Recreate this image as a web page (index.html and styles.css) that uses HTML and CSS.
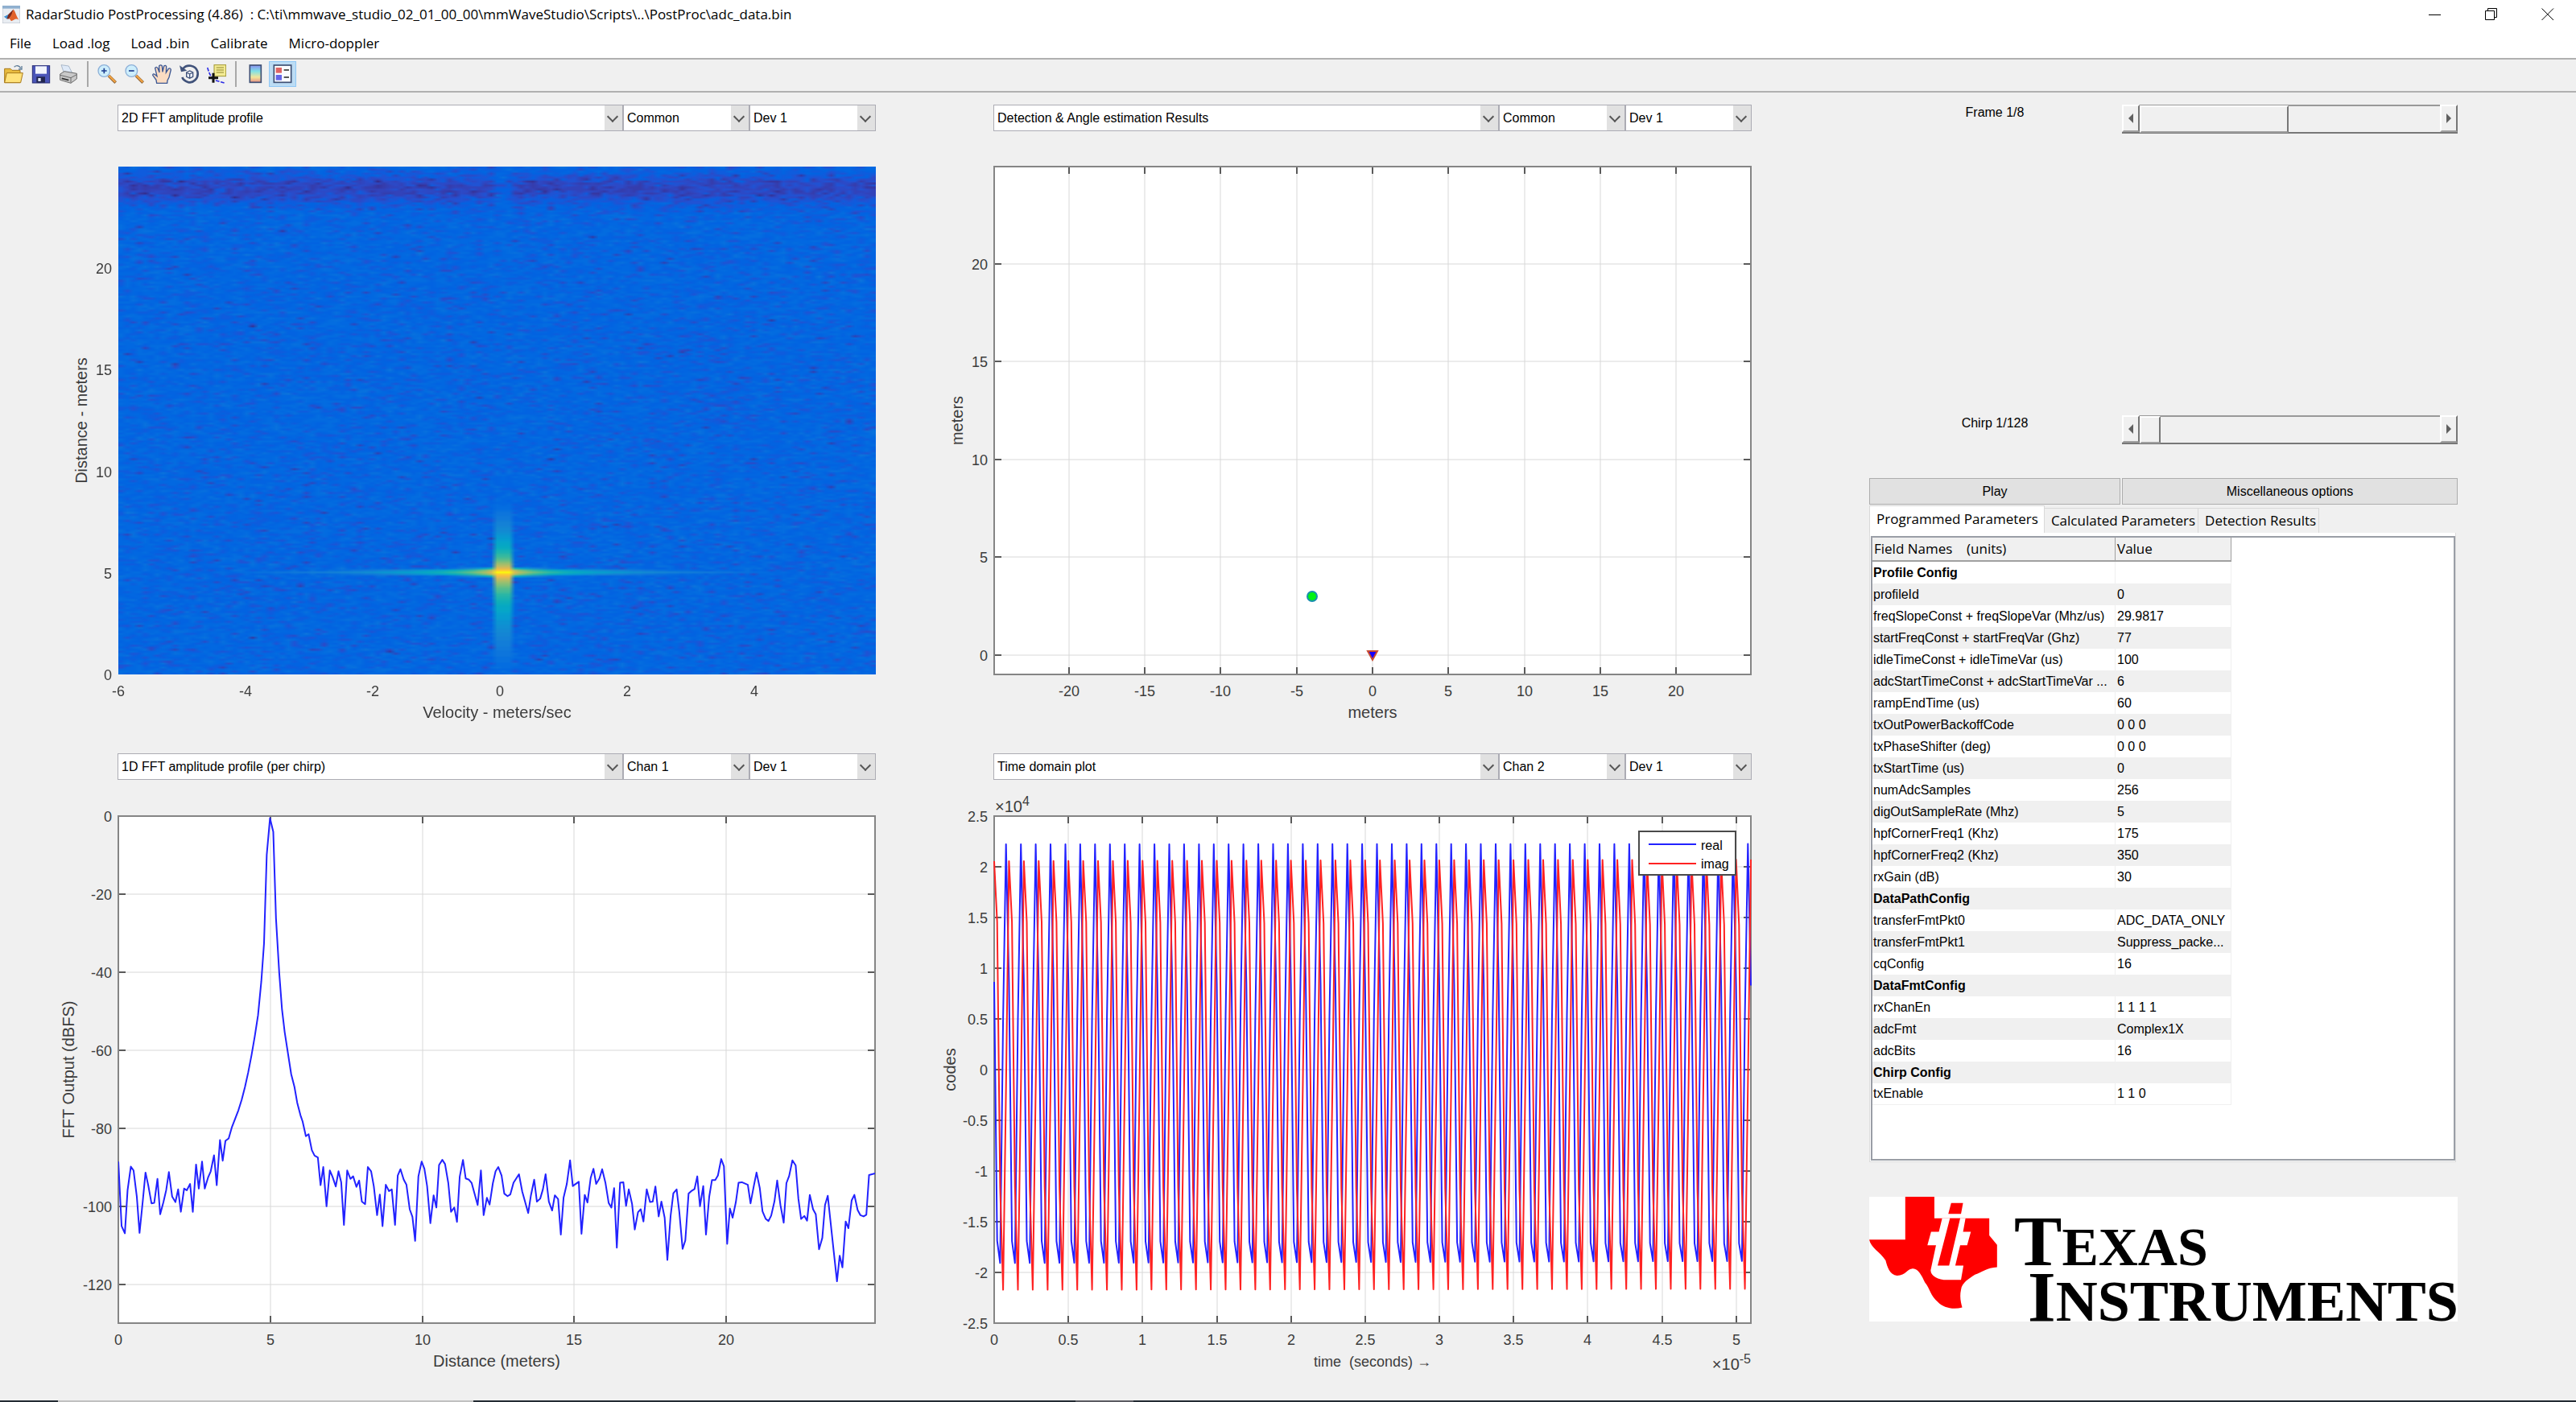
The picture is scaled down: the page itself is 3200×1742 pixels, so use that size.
FILE: index.html
```html
<!DOCTYPE html>
<html lang="en">
<head>
<meta charset="utf-8">
<title>RadarStudio PostProcessing (4.86)</title>
<link rel="stylesheet" href="styles.css">
</head>
<body>
<header class="titlebar">
  <svg class="app-icon" viewBox="0 0 24 24" aria-hidden="true"><rect x="0" y="0" width="24" height="24" fill="#e9edf2" stroke="#b4bcc6"/><rect x="0" y="0" width="24" height="4" fill="#8fb0cf"/><path d="M2 15 L8 12 L11 15 L6 18Z" fill="#3f8fd0"/><path d="M8 12 L15 5 L13 12 L9 18 L6 18Z" fill="#7d2a1c"/><path d="M15 5 C18 9 19 15 22 19 C18 16 15 20 12 21 L9 17 C12 15 13 10 15 5Z" fill="#e2622a"/></svg>
  <h1 class="window-title">RadarStudio PostProcessing (4.86) &nbsp;: C:\ti\mmwave_studio_02_01_00_00\mmWaveStudio\Scripts\..\PostProc\adc_data.bin</h1>
  <div class="window-buttons">
    <button type="button" aria-label="Minimize"><svg viewBox="0 0 16 16"><path d="M0 8.5H15"/></svg></button>
    <button type="button" aria-label="Restore"><svg viewBox="0 0 16 16"><path d="M3.5 3V.5H14.500V11.500H12M.5 3.500H11.500V14.500H.5Z"/></svg></button>
    <button type="button" aria-label="Close"><svg viewBox="0 0 16 16"><path d="M.5 .5L15 15M15 .5L.5 15"/></svg></button>
  </div>
</header>
<nav class="menubar" aria-label="Main menu">
  <button type="button">File</button>
  <button type="button">Load .log</button>
  <button type="button">Load .bin</button>
  <button type="button">Calibrate</button>
  <button type="button">Micro-doppler</button>
</nav>
<div class="toolbar" role="toolbar" aria-label="Figure tools">
  <button type="button" aria-label="Open"><svg viewBox="12 30 72 72"><path d="M14 46H36L42 52H72V98H14Z" fill="#e8bb3e" stroke="#a8791a" stroke-width="3"/><path d="M22 62H82L74 98H14Z" fill="#ffe27a" stroke="#a8791a" stroke-width="3"/><path d="M50 40C58 32 68 34 74 44M78 36V48H66" fill="none" stroke="#5f7d99" stroke-width="4"/></svg></button>
  <button type="button" aria-label="Save"><svg viewBox="119 30 72 72"><rect x="123" y="35" width="64" height="64" fill="#4a55b8" stroke="#262b75" stroke-width="3"/><rect x="134" y="37" width="42" height="28" fill="#f2f5fd"/><rect x="138" y="76" width="32" height="22" fill="#22264f"/><rect x="144" y="81" width="10" height="12" fill="#dfe4f6"/></svg></button>
  <button type="button" aria-label="Print"><svg viewBox="221 30 72 72"><path d="M230 32L258 36L270 60L242 66Z" fill="#dfeaf8" stroke="#8c9fb5" stroke-width="2"/><path d="M226 66L242 56L288 64V84L266 100L226 88Z" fill="#c9c9c9" stroke="#6b6b6b" stroke-width="3"/><path d="M226 70L266 80L288 68M266 80V98" stroke="#6b6b6b" stroke-width="3" fill="none"/><path d="M232 82L258 89" stroke="#333" stroke-width="5"/></svg></button>
  <span class="separator"></span>
  <button type="button" aria-label="Zoom in"><svg viewBox="360 30 72 72"><path d="M402 72L428 98" stroke="#8a6236" stroke-width="11"/><path d="M403 72L427 96" stroke="#f3a443" stroke-width="7"/><circle cx="385" cy="54" r="22" fill="#cdeefc" stroke="#8db0d8" stroke-width="4"/><path d="M375 54H395M385 44V64" stroke="#1d3d8f" stroke-width="5"/></svg></button>
  <button type="button" aria-label="Zoom out"><svg viewBox="463 30 72 72"><path d="M505 72L531 98" stroke="#8a6236" stroke-width="11"/><path d="M506 72L530 96" stroke="#f3a443" stroke-width="7"/><circle cx="488" cy="54" r="22" fill="#cdeefc" stroke="#8db0d8" stroke-width="4"/><path d="M478 54H498" stroke="#1d3d8f" stroke-width="5"/></svg></button>
  <button type="button" aria-label="Pan"><svg viewBox="567 30 72 72"><path d="M584 100L582 88L569 70Q570 62 578 68L585 74L578 44Q582 36 588 44L594 60L593 36Q599 29 604 36L606 58L611 36Q617 31 620 38L619 60L628 46Q635 42 637 50L630 78L624 90L623 100Z" fill="#fbdcc2" stroke="#3d5894" stroke-width="4"/></svg></button>
  <button type="button" aria-label="Rotate 3D"><svg viewBox="671 30 72 72"><path d="M684 46C698 28 730 32 738 56C744 84 720 102 702 96C690 92 684 86 681 78" fill="none" stroke="#40527a" stroke-width="8"/><path d="M671 34L677 58L699 53Z" fill="#40527a"/><path d="M697 60L709 54L721 60V76L709 82L697 76ZM697 60L709 66L721 60M709 66V82" fill="#eef3fb" stroke="#40527a" stroke-width="4"/></svg></button>
  <button type="button" aria-label="Data cursor"><svg viewBox="773 30 72 72"><path d="M775 42C780 56 782 66 792 80M806 90L842 100" stroke="#2a2ae6" stroke-width="5" stroke-dasharray="14 5" fill="none"/><rect x="800" y="32" width="44" height="42" fill="#f3eb94" stroke="#a09632" stroke-width="3"/><path d="M808 42H836M808 51H836M808 60H836" stroke="#b3a951" stroke-width="4"/><path d="M797 62V98M779 80H815" stroke="#111" stroke-width="9"/></svg></button>
  <span class="separator"></span>
  <button type="button" aria-label="Insert colorbar"><svg viewBox="914 30 72 72"><defs><linearGradient id="bar" x1="0" y1="0" x2="0" y2="1"><stop offset="0" stop-color="#8a8ff0"/><stop offset=".35" stop-color="#7fe0e6"/><stop offset=".7" stop-color="#f2e59a"/><stop offset="1" stop-color="#e88f86"/></linearGradient></defs><rect x="930" y="33" width="42" height="64" fill="url(#bar)" stroke="#3e4f73" stroke-width="5"/></svg></button>
  <button type="button" class="active" aria-label="Insert legend" aria-pressed="true"><svg viewBox="1016 30 72 72"><rect x="1020" y="33" width="64" height="64" fill="#fafcff" stroke="#3e4f73" stroke-width="5"/><rect x="1027" y="42" width="22" height="20" fill="#e06464"/><rect x="1027" y="69" width="22" height="20" fill="#6565e8"/><path d="M1057 51H1076M1057 78H1076" stroke="#222" stroke-width="5"/></svg></button>
</div>

<main class="workspace">
  <div class="plots">
    <section class="panel">
      <div class="pickers">
        <label class="combo wide"><select aria-label="Plot type"><option>2D FFT amplitude profile</option></select></label>
        <label class="combo"><select aria-label="Channel"><option>Common</option></select></label>
        <label class="combo"><select aria-label="Device"><option>Dev 1</option></select></label>
      </div>
      <svg class="chart" id="fft2d" viewBox="60 163 1028 757" role="img" aria-label="2D FFT amplitude profile">
        <foreignObject x="147" y="207" width="941" height="631"><canvas id="heatmap" class="heatmap" width="127" height="256"></canvas></foreignObject>
      </svg>
    </section>
    <section class="panel">
      <div class="pickers">
        <label class="combo wide"><select aria-label="Plot type"><option>Detection &amp; Angle estimation Results</option></select></label>
        <label class="combo"><select aria-label="Channel"><option>Common</option></select></label>
        <label class="combo"><select aria-label="Device"><option>Dev 1</option></select></label>
      </div>
      <svg class="chart" id="detection" viewBox="1148 163 1028 757" role="img" aria-label="Detection results"></svg>
    </section>
    <section class="panel">
      <div class="pickers">
        <label class="combo wide"><select aria-label="Plot type"><option>1D FFT amplitude profile (per chirp)</option></select></label>
        <label class="combo"><select aria-label="Channel"><option>Chan 1</option></select></label>
        <label class="combo"><select aria-label="Device"><option>Dev 1</option></select></label>
      </div>
      <svg class="chart" id="fft1d" viewBox="60 969 1028 757" role="img" aria-label="1D FFT amplitude profile"></svg>
    </section>
    <section class="panel">
      <div class="pickers">
        <label class="combo wide"><select aria-label="Plot type"><option>Time domain plot</option></select></label>
        <label class="combo"><select aria-label="Channel"><option>Chan 2</option></select></label>
        <label class="combo"><select aria-label="Device"><option>Dev 1</option></select></label>
      </div>
      <svg class="chart" id="time" viewBox="1148 969 1028 757" role="img" aria-label="Time domain plot"></svg>
    </section>
  </div>

  <aside class="side">
    <div class="stepper frame">
      <label for="frame">Frame 1/8</label>
      <div class="scroller">
        <button type="button" class="prev" aria-label="Previous frame"></button>
        <input id="frame" type="range" min="1" max="8" value="1">
        <button type="button" class="next" aria-label="Next frame"></button>
      </div>
    </div>
    <div class="stepper chirp">
      <label for="chirp">Chirp 1/128</label>
      <div class="scroller">
        <button type="button" class="prev" aria-label="Previous chirp"></button>
        <input id="chirp" type="range" min="1" max="128" value="1">
        <button type="button" class="next" aria-label="Next chirp"></button>
      </div>
    </div>
    <div class="actions">
      <button type="button">Play</button>
      <button type="button">Miscellaneous options</button>
    </div>
    <div class="tabs" role="tablist">
      <button type="button" role="tab" aria-selected="true">Programmed Parameters</button>
      <button type="button" role="tab" aria-selected="false">Calculated Parameters</button>
      <button type="button" role="tab" aria-selected="false">Detection Results</button>
    </div>
    <div class="tab-panel" role="tabpanel">
      <div class="table-box">
        <table>
          <thead><tr><th>Field Names &nbsp; &nbsp;(units)</th><th>Value</th></tr></thead>
          <tbody>
            <tr class="group"><td>Profile Config</td><td></td></tr>
            <tr><td>profileId</td><td>0</td></tr>
            <tr><td>freqSlopeConst + freqSlopeVar (Mhz/us)</td><td>29.9817</td></tr>
            <tr><td>startFreqConst + startFreqVar (Ghz)</td><td>77</td></tr>
            <tr><td>idleTimeConst + idleTimeVar (us)</td><td>100</td></tr>
            <tr><td>adcStartTimeConst + adcStartTimeVar ...</td><td>6</td></tr>
            <tr><td>rampEndTime (us)</td><td>60</td></tr>
            <tr><td>txOutPowerBackoffCode</td><td>0 0 0</td></tr>
            <tr><td>txPhaseShifter (deg)</td><td>0 0 0</td></tr>
            <tr><td>txStartTime (us)</td><td>0</td></tr>
            <tr><td>numAdcSamples</td><td>256</td></tr>
            <tr><td>digOutSampleRate (Mhz)</td><td>5</td></tr>
            <tr><td>hpfCornerFreq1 (Khz)</td><td>175</td></tr>
            <tr><td>hpfCornerFreq2 (Khz)</td><td>350</td></tr>
            <tr><td>rxGain (dB)</td><td>30</td></tr>
            <tr class="group"><td>DataPathConfig</td><td></td></tr>
            <tr><td>transferFmtPkt0</td><td>ADC_DATA_ONLY</td></tr>
            <tr><td>transferFmtPkt1</td><td>Suppress_packe...</td></tr>
            <tr><td>cqConfig</td><td>16</td></tr>
            <tr class="group"><td>DataFmtConfig</td><td></td></tr>
            <tr><td>rxChanEn</td><td>1 1 1 1</td></tr>
            <tr><td>adcFmt</td><td>Complex1X</td></tr>
            <tr><td>adcBits</td><td>16</td></tr>
            <tr class="group"><td>Chirp Config</td><td></td></tr>
            <tr><td>txEnable</td><td>1 1 0</td></tr>
          </tbody>
        </table>
      </div>
    </div>
    <svg class="logo" viewBox="2322 1488 731 155" role="img" aria-label="Texas Instruments">
      <rect x="2322" y="1488" width="731" height="155" fill="#fff"/>
      <svg x="2322" y="1488" width="731" height="155" viewBox="40 1096 1436 381" preserveAspectRatio="none">
        <path fill="#f00" d="M40 1227H128V1096H199V1162H333V1214L352 1243V1311C328 1312 312 1328 298 1334C284 1346 266 1358 264 1380C260 1402 264 1420 267 1434C244 1442 220 1434 208 1418C190 1400 188 1376 176 1358C168 1336 158 1312 144 1316C132 1318 130 1335 108 1337C90 1334 84 1310 80 1290C66 1264 44 1252 40 1227Z"/>
        <path fill="#fff" d="M218 1162L210 1203H191L182 1244H203L190 1320C190 1338 208 1350 230 1350H264L270 1306H250L262 1244H279L288 1203H269L275 1162Z"/>
        <path fill="#f00" d="M237 1162H262L235 1306H207ZM240 1115H269L264 1148H233Z"/>
      </svg>
      <text x="2502" y="1573" class="logo-text"><tspan class="cap">T</tspan>EXAS</text>
      <text x="2519" y="1642" class="logo-text second"><tspan class="cap">I</tspan>NSTRUMENTS</text>
    </svg>
  </aside>
</main>
<footer class="taskbar"><span class="gap-left"></span><span class="lit"></span><span class="gap-mid"></span><span class="dim"></span></footer>
<script src="charts.js"></script>
</body>
</html>
```
FILE: styles.css
```css
* { box-sizing: border-box; }
body {
  margin: 0;
  min-height: 100vh;
  display: flex;
  flex-direction: column;
  background: #f0f0f0;
  color: #000;
  font: 16px/20px "Liberation Sans", Arial, sans-serif;
}
button, select, input { font: inherit; color: inherit; margin: 0; }

.titlebar {
  display: flex;
  align-items: center;
  height: 36px;
  padding-left: 3px;
  background: #fff;
}
.app-icon { width: 22px; height: 22px; }
.window-title {
  flex: 1;
  margin: 0 0 0 7px;
  font: 17px/24px "Open Sans", "Noto Sans", sans-serif;
  white-space: nowrap;
}
.window-buttons { display: flex; }
.window-buttons button {
  width: 70px;
  height: 36px;
  padding: 0;
  border: 0;
  background: none;
}
.window-buttons svg {
  display: block;
  width: 16px;
  height: 16px;
  margin: 0 auto;
  fill: none;
  stroke: #000;
}

.menubar {
  display: flex;
  gap: 26px;
  height: 36px;
  padding: 0 12px;
  background: #fff;
}
.menubar button {
  padding: 0;
  border: 0;
  background: none;
  font: 17px/24px "Open Sans", "Noto Sans", sans-serif;
}

.toolbar {
  display: flex;
  align-items: flex-start;
  height: 43px;
  padding-top: 2px;
  border-top: 2px solid #b0b0b0;
  border-bottom: 2px solid #b0b0b0;
}
.toolbar button {
  width: 34px;
  height: 32px;
  padding: 3px 4px;
  border: 1px solid transparent;
  background: none;
}
.toolbar button.active { border-color: #90c8f6; background: #bcdcf4; }
.toolbar svg { display: block; width: 24px; height: 24px; }
.separator {
  width: 14px;
  height: 32px;
  background: linear-gradient(#a8a8a8, #a8a8a8) center / 2px 100% no-repeat;
}

.workspace {
  flex: 1;
  display: grid;
  grid-template-columns: minmax(0, 2116fr) minmax(0, 817fr);
  column-gap: 60px;
  padding: 15px 147px 0 60px;
}
.plots {
  display: grid;
  grid-template-columns: repeat(2, minmax(0, 1fr));
  gap: 16px 60px;
  align-content: start;
}
.pickers { display: flex; padding-left: 86px; }
.combo {
  flex: 1;
  position: relative;
  height: 33px;
}
.combo.wide { flex: 4; }
.combo select {
  display: block;
  width: 100%;
  height: 100%;
  padding: 0 24px 0 4px;
  border: 1px solid #acacb4;
  border-radius: 0;
  background: linear-gradient(#e1e1e1, #e1e1e1) right / 22px 100% no-repeat #fff;
  appearance: none;
}
.combo::after {
  content: "";
  position: absolute;
  top: 10px;
  right: 8px;
  width: 8px;
  height: 8px;
  border: solid #555;
  border-width: 0 2px 2px 0;
  transform: rotate(45deg);
  pointer-events: none;
}

.chart { display: block; width: 100%; height: auto; overflow: visible; }
.heatmap { display: block; width: 100%; height: 100%; }
.chart text { font-family: "Liberation Sans", Arial, sans-serif; fill: #3c3c3c; white-space: pre; }
.tick { font-size: 18px; }
.axis-label { font-size: 20px; }
.axis-label.small { font-size: 18px; }
.scale { font-size: 20px; }
.exponent { font-size: 16px; }
.legend-text { font-size: 16px; }
.chart .legend-text { fill: #000; }
.middle { text-anchor: middle; }
.end { text-anchor: end; }
.plot-bg { fill: #fff; }
.frame-line { fill: none; stroke: #858585; stroke-width: 2; }
.grid-line { stroke: #d8d8d8; stroke-width: 1; }
.tick-line { stroke: #5a5a5a; stroke-width: 2; }
.trace { fill: none; stroke-width: 2; stroke-linejoin: round; vector-effect: non-scaling-stroke; }
.real { stroke: #2222ff; }
.imag { stroke: #ff2222; }
.legend-box { fill: #fff; stroke: #4a4a4a; stroke-width: 2; }
.target { fill: #00f314; stroke: #1a8fae; stroke-width: 2; }
.radar { fill: #1400ff; stroke: #c94b32; stroke-width: 2; }

.side { padding-left: 86px; }
.stepper { display: grid; grid-template-columns: 312fr 419fr; align-items: start; }
.stepper.chirp { margin-top: 350px; }
.stepper label { text-align: center; }
.scroller {
  display: flex;
  height: 36px;
  margin-left: 2px;
  border-bottom: 2px solid #777;
}
.scroller button {
  flex: none;
  display: grid;
  place-items: center;
  width: 22px;
  padding: 0;
  border: 2px solid;
  border-color: #fff #777 #a0a0a0 #fff;
  background: #f0f0f0;
}
.scroller button::before { content: ""; border: 6px solid transparent; }
.scroller .prev::before { border-left-width: 0; border-right-color: #606060; }
.scroller .next::before { border-right-width: 0; border-left-color: #606060; }
.scroller input {
  flex: 1;
  min-width: 0;
  border-top: 2px solid #999;
  background: #f0f0f0;
  appearance: none;
}
.scroller input::-webkit-slider-thumb {
  appearance: none;
  width: 26px;
  height: 34px;
  border: 2px solid;
  border-color: #fff #777 #a0a0a0 #fff;
  background: #f0f0f0;
}
.frame input::-webkit-slider-thumb { width: 185px; }

.actions {
  display: grid;
  grid-template-columns: 312fr 417fr;
  gap: 2px;
  margin-top: 42px;
}
.actions button {
  height: 33px;
  padding: 0;
  border: 1px solid #adadad;
  background: #e1e1e1;
}

.tabs { display: flex; align-items: flex-end; height: 35px; }
.tabs button {
  height: 31px;
  padding: 0 3px 0 8px;
  border: 1px solid #d9d9d9;
  border-width: 1px 1px 0 0;
  background: #f0f0f0;
  font: 17px/24px "Open Sans", "Noto Sans", sans-serif;
  white-space: nowrap;
}
.tabs button[aria-selected="true"] {
  height: 34px;
  padding: 0 7px 2px 8px;
  border-left-width: 1px;
  background: #fff;
}
.tab-panel {
  margin-right: 2px;
  padding: 4px 0 1px 1px;
  border: 1px solid #dcdcdc;
  border-top: 0;
  background: #fff;
}
.table-box {
  padding-bottom: 67px;
  border: 2px solid #9a9ea6;
  background: #fff;
}
table { width: 446px; border-collapse: separate; border-spacing: 0; table-layout: fixed; }
th {
  height: 30px;
  padding: 0 2px;
  border: solid #a0a0a0;
  border-width: 0 1px 2px 0;
  background: #f0f0f0;
  font: 17px/24px "Open Sans", "Noto Sans", sans-serif;
  text-align: left;
}
th:first-child { width: 302px; }
td {
  height: 27px;
  padding: 0 2px;
  border-right: 1px solid #f0f0f0;
  white-space: nowrap;
}
td:first-child { padding-left: 1px; }
tbody tr:nth-child(even) { background: #f0f0f0; }
tbody tr:last-child td { border-bottom: 1px solid #f0f0f0; }
.group td { font-weight: bold; }

.logo { display: block; width: 100%; height: auto; margin-top: 43px; overflow: visible; }
.logo-text { font: bold 68px/1 "Liberation Serif", "Times New Roman", serif; }
.logo-text.second { font-size: 72px; }
.logo-text .cap { font-size: 89px; }

.taskbar { display: flex; height: 2px; background: #232b33; }
.gap-left { flex: 72; }
.lit { flex: 516; background: #c0c0c0; }
.gap-mid { flex: 748; }
.dim { flex: 72; background: #5b5b61; margin-right: 56%; }
```
FILE: charts.js
```js
const NS = "http://www.w3.org/2000/svg";

function add(parent, name, attrs, text) {
  const node = document.createElementNS(NS, name);
  for (const key in attrs) node.setAttribute(key, attrs[key]);
  if (text !== undefined) node.textContent = text;
  parent.appendChild(node);
  return node;
}

// Axes frame, grid, tick marks and tick labels. Ticks are [position, label] pairs.
function axes(svg, o) {
  const { left, right, top, bottom } = o;
  if (!o.bare) {
    add(svg, "rect", { class: "plot-bg", x: left, y: top, width: right - left, height: bottom - top });
    for (const [x] of o.xs) add(svg, "path", { class: "grid-line", d: `M${x} ${top}V${bottom}` });
    for (const [y] of o.ys) add(svg, "path", { class: "grid-line", d: `M${left} ${y}H${right}` });
    for (const [x] of o.xs) add(svg, "path", { class: "tick-line", d: `M${x} ${top}v9M${x} ${bottom}v-9` });
    for (const [y] of o.ys) add(svg, "path", { class: "tick-line", d: `M${left} ${y}h9M${right} ${y}h-9` });
    add(svg, "rect", { class: "frame-line", x: left, y: top, width: right - left, height: bottom - top });
  }
  for (const [x, label] of o.xs) add(svg, "text", { class: "tick middle", x, y: bottom + 27 }, label);
  for (const [y, label] of o.ys) add(svg, "text", { class: "tick end", x: left - 8, y: y + 7 }, label);
  add(svg, "text", { class: "axis-label middle " + (o.labelSize || ""), x: (left + right) / 2, y: bottom + 54 }, o.xlabel);
  const cy = (top + bottom) / 2;
  add(svg, "text", { class: "axis-label middle", x: o.ylabelX, y: cy, transform: `rotate(-90 ${o.ylabelX} ${cy})` }, o.ylabel);
}

function ticks(from, to, step, map) {
  const out = [];
  for (let v = from; v <= to + 1e-9; v += step) out.push([Math.round(map(v)), String(+v.toFixed(1))]);
  return out;
}

// 2D FFT heat map: doppler bins across, range bins down.
const PARULA = [[53,42,135],[54,48,147],[54,54,160],[53,61,173],[50,67,186],[44,74,199],[32,83,212],[15,92,221],[3,99,225],[2,104,225],[4,109,224],[8,113,222],[13,117,220],[16,121,218],[18,125,216],[20,129,214],[20,133,212],[19,137,211],[16,142,210],[12,147,210],[9,152,209],[7,156,207],[6,160,205],[6,164,202],[6,167,198],[7,169,194],[10,172,190],[15,174,185],[21,177,180],[29,179,175],[37,181,169],[46,183,164],[56,185,158],[66,187,152],[77,188,146],[89,189,140],[101,190,134],[113,191,128],[124,191,123],[135,191,119],[146,191,115],[156,191,111],[165,190,107],[174,190,103],[183,189,100],[192,188,96],[200,188,93],[209,187,89],[217,186,86],[225,185,82],[233,185,78],[241,185,74],[248,187,68],[253,190,61],[255,195,55],[254,200,50],[252,206,46],[250,211,42],[247,216,38],[245,222,33],[245,228,29],[245,235,24],[246,243,19],[249,251,14]];
let seed = 20211;
function random() {
  seed = (seed * 1664525 + 1013904223) >>> 0;
  return (seed + 1) / 4294967297;
}
function drawHeatmap(canvas) {
  const { width, height } = canvas;
  const ctx = canvas.getContext("2d");
  const img = ctx.createImageData(width, height);
  for (let r = 0; r < height; r++) {
    const metres = 25 * (1 - (r + 0.5) / height);
    const band = 4.4 * Math.exp(-(((metres - 23.9) / 0.7) ** 2));
    const rows = Math.abs(r - 204);
    const decay = r < 204 ? 17.6 : 15.8;
    for (let c = 0; c < width; c++) {
      let power = 0;
      for (let k = 0; k < 3; k++) power -= Math.log(random());
      const cols = Math.abs(c - 64);
      let v = 8.9 + 2.1 * Math.log(power / 3) - (cols > 1 ? band : band / 3);
      if (cols <= 1) v = Math.max(v, 63 - decay * Math.log(1 + rows / 1.7));
      else v = Math.max(v, 57 - 12.5 * Math.log(cols) - 5 * rows * rows);
      const p = PARULA[Math.max(0, Math.min(63, Math.round(v)))];
      img.data.set([p[0], p[1], p[2], 255], (r * width + c) * 4);
    }
  }
  ctx.putImageData(img, 0, 0);
}
drawHeatmap(document.getElementById("heatmap"));
axes(document.getElementById("fft2d"), {
  bare: true, left: 147, right: 1088, top: 207, bottom: 838,
  xs: ticks(-6, 4, 2, v => 621 + v * 79), ys: ticks(0, 20, 5, v => 838 - v * 25.25),
  xlabel: "Velocity - meters/sec", ylabel: "Distance - meters", ylabelX: 108
});

// Detected targets.
const detection = document.getElementById("detection");
axes(detection, {
  left: 1235, right: 2175, top: 207, bottom: 838,
  xs: ticks(-20, 20, 5, v => 1705 + v * 18.86), ys: ticks(0, 20, 5, v => 813.6 - v * 24.3),
  xlabel: "meters", ylabel: "meters", ylabelX: 1196
});
add(detection, "circle", { class: "target", cx: 1630, cy: 741, r: 6 });
add(detection, "path", { class: "radar", d: "M1699 809H1711L1705 820Z" });

// Range spectrum.
const fft1d = document.getElementById("fft1d");
axes(fft1d, {
  left: 147, right: 1087, top: 1014, bottom: 1644,
  xs: ticks(0, 20, 5, v => 147 + v * 37.76), ys: ticks(-120, 0, 20, v => 1014 - v * 4.848),
  xlabel: "Distance (meters)", ylabel: "FFT Output (dBFS)", ylabelX: 92
});
const spectrum = add(fft1d, "svg", { x: 147, y: 1014, width: 940, height: 630, viewBox: "128 178 1392 1202", preserveAspectRatio: "none" });
add(spectrum, "polyline", { class: "trace real", points: "128,997 134,1150 140,1167 145,1065 151,1009 156,1018 162,1080 167,1166 173,1090 178,1023 183,1053 189,1096 194,1095 200,1038 205,1122 211,1093 216,1065 221,1022 227,1080 233,1093 238,1063 243,1116 249,1061 254,1065 260,1050 265,1116 271,1004 276,1061 282,997 287,1061 293,1035 298,1020 304,982 309,1053 315,946 320,995 325,948 331,942 337,915 343,895 349,875 355,850 361,820 367,785 373,745 379,700 385,650 391,570 396,480 401,270 407,183 413,215 418,420 424,550 429,635 434,690 440,740 446,790 452,820 457,857 463,887 467,902 473,937 478,932 484,970 489,983 495,987 500,1053 505,1010 511,1103 517,1018 522,1033 528,1056 533,1020 538,1046 543,1147 549,1018 555,1038 560,1032 566,1057 571,1042 576,1092 582,1098 587,1010 593,1020 598,1056 604,1124 609,1075 614,1150 620,1052 626,1067 631,1063 637,1147 642,1030 647,1015 653,1040 658,1052 664,1110 669,1128 674,1185 680,1032 686,997 691,1014 696,1055 702,1143 708,1077 713,1106 718,1005 724,993 729,1003 735,1048 740,1116 746,1106 751,1140 756,1033 762,993 767,1037 773,1040 778,1048 789,1100 795,1018 800,1124 806,1083 811,1099 817,1048 822,1020 827,1010 833,1030 838,1073 844,1079 849,1075 855,1047 865,1027 871,1068 882,1119 887,1077 893,1040 898,1092 904,1085 909,1063 914,1027 920,1092 926,1113 931,1077 937,1086 942,1170 947,1083 953,1050 959,994 964,1055 975,1045 980,1168 986,1076 991,1094 997,1035 1002,1014 1007,1050 1013,1037 1018,1015 1024,1047 1030,1095 1035,1106 1040,1060 1045,1201 1051,1047 1057,1046 1062,1102 1067,1063 1073,1097 1078,1158 1084,1117 1089,1110 1094,1139 1100,1063 1106,1093 1111,1092 1116,1056 1122,1127 1127,1092 1133,1130 1138,1230 1144,1125 1149,1072 1155,1063 1160,1117 1166,1204 1171,1184 1177,1073 1182,1067 1188,1062 1193,1032 1198,1103 1204,1055 1209,1170 1215,1080 1220,1041 1226,1041 1231,1030 1237,991 1242,1008 1248,1192 1253,1108 1258,1130 1264,1093 1269,1047 1275,1046 1286,1052 1291,1096 1297,1055 1302,1023 1308,1060 1313,1115 1319,1133 1324,1138 1329,1125 1335,1091 1340,1042 1346,1100 1352,1142 1357,1048 1362,1031 1368,994 1374,1006 1379,1085 1384,1133 1390,1126 1395,1137 1400,1076 1406,1110 1411,1122 1417,1205 1423,1178 1428,1100 1433,1078 1439,1150 1444,1210 1450,1281 1455,1220 1460,1248 1466,1139 1471,1155 1477,1089 1482,1076 1488,1112 1493,1124 1499,1127 1504,1123 1509,1029 1520,1025" });

// Beat signal: one complex tone, five samples to a period.
const time = document.getElementById("time");
axes(time, {
  left: 1235, right: 2175, top: 1014, bottom: 1644,
  xs: ticks(0, 5, 0.5, v => 1235 + v * 184.35), ys: ticks(-2.5, 2.5, 0.5, v => 1329 - v * 126),
  xlabel: "time  (seconds) \u2192", labelSize: "small", ylabel: "codes", ylabelX: 1187
});
const real = [], imag = [];
for (let n = 0; n < 256; n++) {
  const phase = (67.2 + 72 * n + n / 256) * Math.PI / 180;
  const x = (1235 + n * 940 / 255).toFixed(1);
  real.push(x + "," + (1329 - 281 * Math.cos(phase)).toFixed(1));
  imag.push(x + "," + (1329 - 281 * Math.sin(phase)).toFixed(1));
}
add(time, "polyline", { class: "trace real", points: real.join(" ") });
add(time, "polyline", { class: "trace imag", points: imag.join(" ") });
const times4 = add(time, "text", { class: "scale", x: 1236, y: 1009 }, "\u00d710");
add(times4, "tspan", { class: "exponent", dy: -8 }, "4");
const times5 = add(time, "text", { class: "scale end", x: 2175, y: 1702 }, "\u00d710");
add(times5, "tspan", { class: "exponent", dy: -8 }, "-5");
add(time, "rect", { class: "legend-box", x: 2036, y: 1033, width: 120, height: 54 });
add(time, "path", { class: "trace real", d: "M2048 1049H2107" });
add(time, "path", { class: "trace imag", d: "M2048 1073H2107" });
add(time, "text", { class: "legend-text", x: 2113, y: 1056 }, "real");
add(time, "text", { class: "legend-text", x: 2113, y: 1079 }, "imag");
```
